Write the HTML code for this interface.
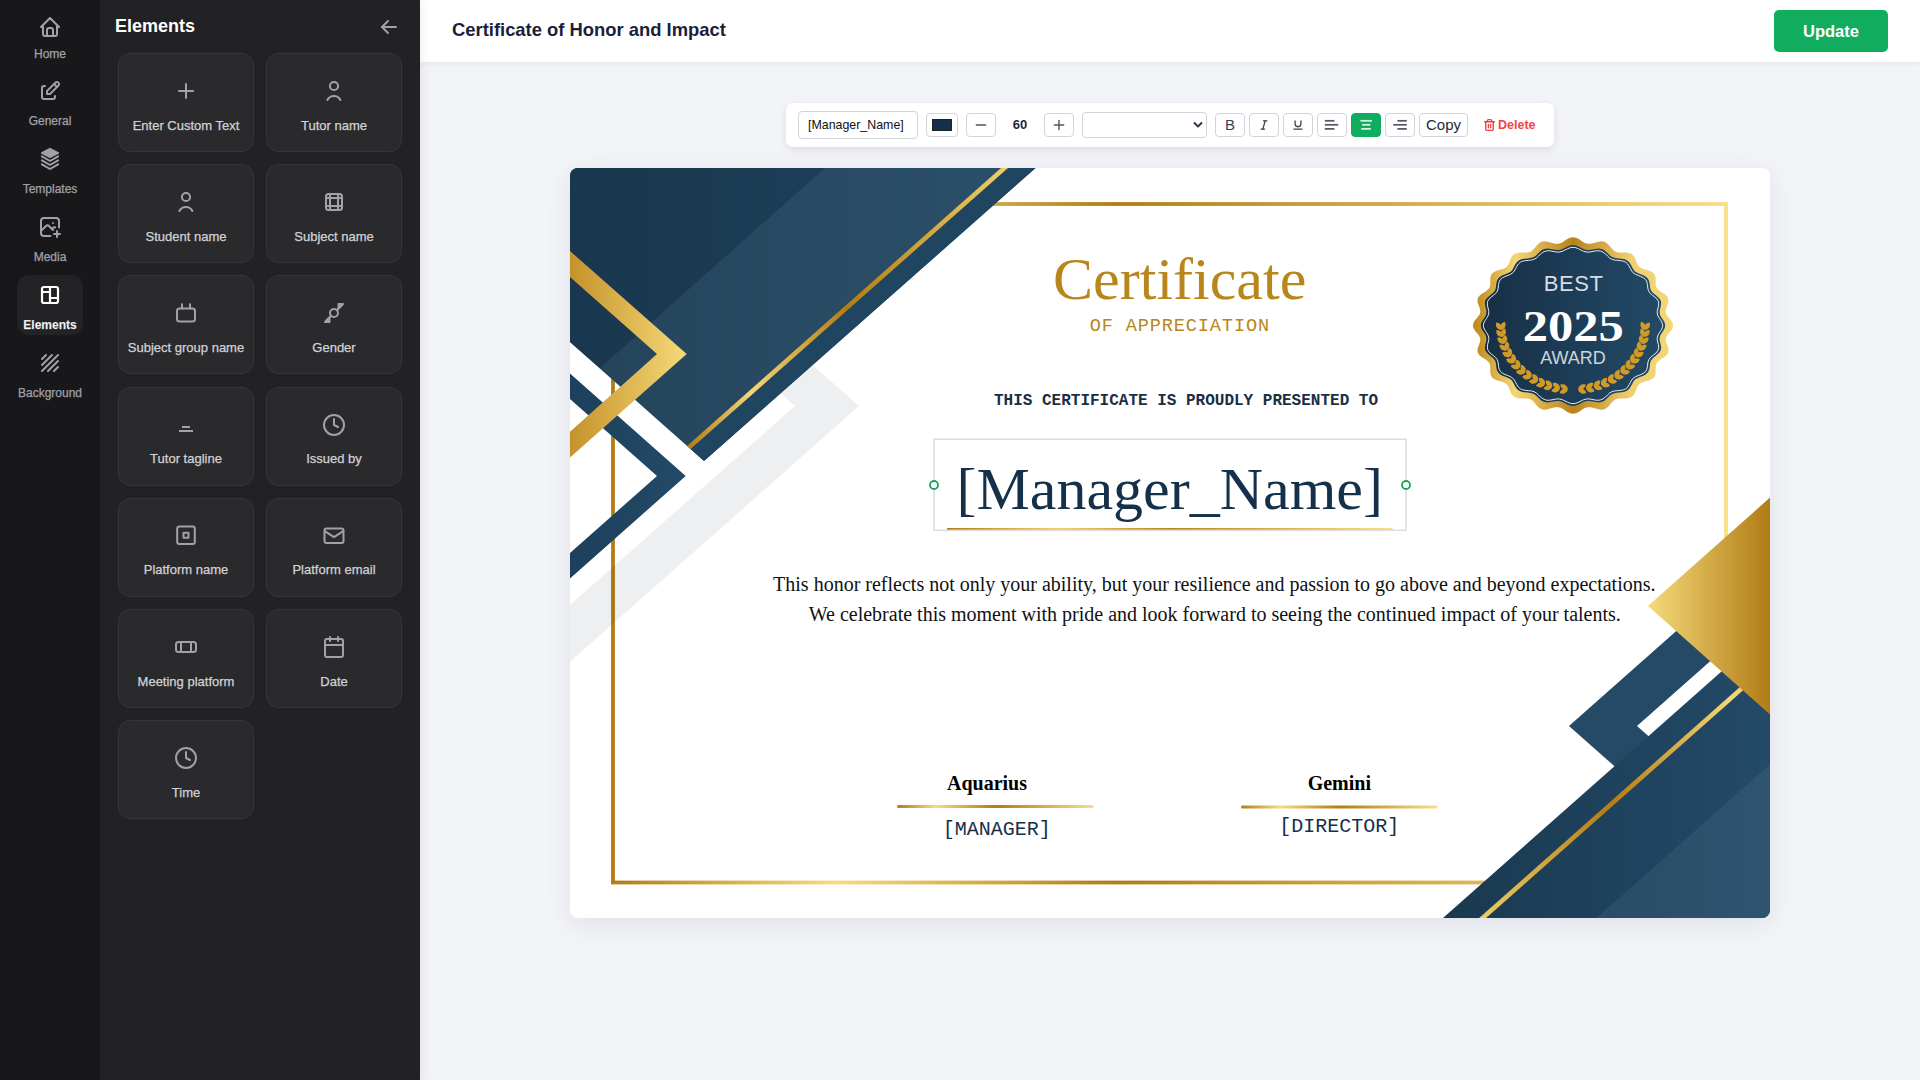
<!DOCTYPE html>
<html><head><meta charset="utf-8">
<style>
*{margin:0;padding:0;box-sizing:border-box}
html,body{width:1920px;height:1080px;overflow:hidden;background:#f3f4f8;font-family:"Liberation Sans",sans-serif}
.abs{position:absolute}
#nav{position:absolute;left:0;top:0;width:100px;height:1080px;background:#18181b}
.ni{position:absolute;left:0;width:100px;text-align:center;color:#a1a1aa;font-size:12px;line-height:14px;-webkit-text-stroke:0.25px #a1a1aa}
.ni svg{position:absolute;left:40px;width:20px;height:20px}
.nact{position:absolute;left:17px;top:275px;width:66px;height:60px;border-radius:12px;background:#232326}
#panel{position:absolute;left:100px;top:0;width:320px;height:1080px;background:#222224;z-index:2;box-shadow:2px 0 10px rgba(0,0,0,0.07)}
.card{position:absolute;width:136px;height:99px;border:1px solid #353538;border-radius:12px;background:#2a2a2d}
.card svg{position:absolute;left:55px;top:25px;width:24px;height:24px}
.card span{position:absolute;left:0;right:0;top:63.7px;text-align:center;color:#d2d2d6;font-size:13px;line-height:16px;-webkit-text-stroke:0.25px #d2d2d6}
#main{position:absolute;left:420px;top:0;width:1500px;height:1080px;background:#f3f4f8}
#header{position:absolute;left:0;top:0;width:1500px;height:62px;background:#fff;box-shadow:0 1px 6px rgba(20,30,60,0.08)}
#toolbar{position:absolute;left:366px;top:103px;width:768px;height:44px;background:#fff;border-radius:7px;box-shadow:0 3px 8px rgba(20,30,60,0.10)}
.tb{position:absolute;top:10px;height:24px;border:1px solid #d1d5db;border-radius:4px;background:#fff}
#cert{position:absolute;left:150px;top:168px;width:1200px;height:750px;background:#fff;border-radius:8px;overflow:hidden;box-shadow:0 6px 28px rgba(20,30,60,0.09)}
</style></head><body>
<div id="nav">
  <div class="nact"></div>
  <svg class="abs" style="left:38px;top:15px" width="24" height="24" viewBox="0 0 24 24" fill="none" stroke="#a1a1aa" stroke-width="2" stroke-linecap="round" stroke-linejoin="round"><path d="M5 12H3l9-9 9 9h-2"/><path d="M5 12v7a2 2 0 0 0 2 2h10a2 2 0 0 0 2-2v-7"/><path d="M9 21v-6a2 2 0 0 1 2-2h2a2 2 0 0 1 2 2v6"/></svg>
  <div class="ni" style="top:47px">Home</div>
  <svg class="abs" style="left:38px;top:78.5px" width="24" height="24" viewBox="0 0 24 24" fill="none" stroke="#a1a1aa" stroke-width="2" stroke-linecap="round" stroke-linejoin="round"><path d="M7 7H6a2 2 0 0 0-2 2v9a2 2 0 0 0 2 2h9a2 2 0 0 0 2-2v-1"/><path d="M20.385 6.585a2.100 2.100 0 0 0-2.970-2.970L9 12v3h3z"/><path d="M16 5l3 3"/></svg>
  <div class="ni" style="top:114px">General</div>
  <svg class="abs" style="left:38px;top:147px" width="24" height="24" viewBox="0 0 24 24" fill="none" stroke="#a1a1aa" stroke-width="2" stroke-linecap="round" stroke-linejoin="round"><path d="M12 1.6L20.3 6 12 10.4 3.7 6z" fill="#a1a1aa" stroke-width="1.6"/><path d="M3.9 9.3L12 14l8.1-4.7"/><path d="M3.9 13.3L12 18l8.1-4.7"/><path d="M3.9 17.3L12 22l8.1-4.7"/></svg>
  <div class="ni" style="top:182px">Templates</div>
  <svg class="abs" style="left:38px;top:215px" width="24" height="24" viewBox="0 0 24 24" fill="none" stroke="#a1a1aa" stroke-width="2" stroke-linecap="round" stroke-linejoin="round"><path d="M15 8h.01"/><path d="M12.5 21H6a3 3 0 0 1-3-3V6a3 3 0 0 1 3-3h12a3 3 0 0 1 3 3v6.5"/><path d="M3 16l5-5c.928-.893 2.072-.893 3 0l4 4"/><path d="M14 14l1-1c.67-.644 1.45-.824 2.182-.54"/><path d="M16 19h6"/><path d="M19 16v6"/></svg>
  <div class="ni" style="top:250px">Media</div>
  <svg class="abs" style="left:38px;top:283px" width="24" height="24" viewBox="0 0 24 24" fill="none" stroke="#ffffff" stroke-width="2.2" stroke-linecap="round" stroke-linejoin="round"><path d="M4 6a2 2 0 0 1 2-2h12a2 2 0 0 1 2 2v12a2 2 0 0 1-2 2H6a2 2 0 0 1-2-2z"/><path d="M4 9h8"/><path d="M12 15h8"/><path d="M12 4v16"/></svg>
  <div class="ni" style="top:318px;color:#fff;font-weight:bold">Elements</div>
  <svg class="abs" style="left:38px;top:351px" width="24" height="24" viewBox="0 0 24 24" fill="none" stroke="#a1a1aa" stroke-width="2" stroke-linecap="round" stroke-linejoin="round"><path d="M4 8l4-4"/><path d="M14 4L4 14"/><path d="M4 20L20 4"/><path d="M20 10L10 20"/><path d="M20 16l-4 4"/></svg>
  <div class="ni" style="top:386px">Background</div>
</div>
<div id="panel">
<div class="abs" style="left:15px;top:15px;color:#fff;font-size:18px;font-weight:bold;line-height:22px">Elements</div>
<svg class="abs" style="left:277px;top:15px" width="24" height="24" viewBox="0 0 24 24" fill="none" stroke="#a1a1aa" stroke-width="2" stroke-linecap="round" stroke-linejoin="round"><path d="M5 12h14"/><path d="M5 12l6 6"/><path d="M5 12l6-6"/></svg>
<div class="card" style="left:18px;top:53.00px"><svg viewBox="0 0 24 24" fill="none" stroke="#a1a1aa" stroke-width="2" stroke-linecap="round" stroke-linejoin="round"><path d="M12 5v14"/><path d="M5 12h14"/></svg><span>Enter Custom Text</span></div>
<div class="card" style="left:166px;top:53.00px"><svg viewBox="0 0 24 24" fill="none" stroke="#a1a1aa" stroke-width="2" stroke-linecap="round" stroke-linejoin="round"><circle cx="12" cy="7" r="4.1"/><path d="M5.4 21a7.3 7.3 0 0 1 13 0"/></svg><span>Tutor name</span></div>
<div class="card" style="left:18px;top:164.18px"><svg viewBox="0 0 24 24" fill="none" stroke="#a1a1aa" stroke-width="2" stroke-linecap="round" stroke-linejoin="round"><circle cx="12" cy="7" r="4.1"/><path d="M5.4 21a7.3 7.3 0 0 1 13 0"/></svg><span>Student name</span></div>
<div class="card" style="left:166px;top:164.18px"><svg viewBox="0 0 24 24" fill="none" stroke="#a1a1aa" stroke-width="2" stroke-linecap="round" stroke-linejoin="round"><rect x="4" y="4" width="16" height="16" rx="2.5"/><path d="M8 4v16"/><path d="M16 4v16"/><path d="M4 8h16"/><path d="M4 16h16"/></svg><span>Subject name</span></div>
<div class="card" style="left:18px;top:275.36px"><svg viewBox="0 0 24 24" fill="none" stroke="#a1a1aa" stroke-width="2" stroke-linecap="round" stroke-linejoin="round"><rect x="3" y="7.4" width="18" height="13.2" rx="2.5"/><path d="M8 3.2v4.2"/><path d="M16 3.2v4.2"/></svg><span>Subject group name</span></div>
<div class="card" style="left:166px;top:275.36px"><svg viewBox="0 0 24 24" fill="none" stroke="#a1a1aa" stroke-width="2" stroke-linecap="round" stroke-linejoin="round"><circle cx="12" cy="12" r="4"/><path d="M9.2 14.8L4 20"/><path d="M14.8 9.2L20 4"/><path d="M16.5 3h4.5L16.5 7.5z" fill="#a1a1aa"/><path d="M3 21h4.5V16.5z" fill="#a1a1aa"/></svg><span>Gender</span></div>
<div class="card" style="left:18px;top:386.54px"><svg viewBox="0 0 24 24" fill="none" stroke="#a1a1aa" stroke-width="2" stroke-linecap="round" stroke-linejoin="round"><path d="M8 14h8" stroke-linecap="butt"/><path d="M5 18h14" stroke-linecap="butt"/></svg><span>Tutor tagline</span></div>
<div class="card" style="left:166px;top:386.54px"><svg viewBox="0 0 24 24" fill="none" stroke="#a1a1aa" stroke-width="2" stroke-linecap="round" stroke-linejoin="round"><circle cx="12" cy="12" r="10"/><path d="M12 6v6l4 2"/></svg><span>Issued by</span></div>
<div class="card" style="left:18px;top:497.72px"><svg viewBox="0 0 24 24" fill="none" stroke="#a1a1aa" stroke-width="2" stroke-linecap="round" stroke-linejoin="round"><rect x="3.2" y="2.4" width="17.6" height="17.6" rx="2"/><rect x="9.5" y="8.7" width="5" height="5"/></svg><span>Platform name</span></div>
<div class="card" style="left:166px;top:497.72px"><svg viewBox="0 0 24 24" fill="none" stroke="#a1a1aa" stroke-width="2" stroke-linecap="round" stroke-linejoin="round"><rect x="2.5" y="4.6" width="19" height="14.3" rx="2"/><path d="M2.8 7.2l9.2 6 9.2-6"/></svg><span>Platform email</span></div>
<div class="card" style="left:18px;top:608.90px"><svg viewBox="0 0 24 24" fill="none" stroke="#a1a1aa" stroke-width="2" stroke-linecap="round" stroke-linejoin="round"><rect x="2" y="7" width="20" height="10" rx="2.5"/><path d="M7 7v10"/><path d="M17 7v10"/></svg><span>Meeting platform</span></div>
<div class="card" style="left:166px;top:608.90px"><svg viewBox="0 0 24 24" fill="none" stroke="#a1a1aa" stroke-width="2" stroke-linecap="round" stroke-linejoin="round"><rect x="3" y="4" width="18" height="18" rx="2"/><path d="M8 2v4"/><path d="M16 2v4"/><path d="M3 10h18"/></svg><span>Date</span></div>
<div class="card" style="left:18px;top:720.08px"><svg viewBox="0 0 24 24" fill="none" stroke="#a1a1aa" stroke-width="2" stroke-linecap="round" stroke-linejoin="round"><circle cx="12" cy="12" r="10"/><path d="M12 6v6l4 2"/></svg><span>Time</span></div>
</div>
<div id="main">
  <div id="header">
    <div class="abs" style="left:32px;top:19px;font-size:18.4px;font-weight:bold;color:#1c1e3a;line-height:22px;white-space:nowrap">Certificate of Honor and Impact</div>
    <div class="abs" style="left:1354px;top:10px;width:114px;height:42px;background:#10ad5f;border-radius:5px;color:#fff;font-weight:bold;font-size:16.5px;text-align:center;line-height:42px">Update</div>
  </div>
  <div id="toolbar">
    <div class="tb" style="left:12px;top:8px;width:120px;height:28px;border-color:#cfd3da;font-size:12.4px;color:#111;line-height:26px;padding-left:9px">[Manager_Name]</div>
    <div class="tb" style="left:140px;width:32px"><div class="abs" style="left:5px;top:5px;width:20px;height:12px;background:#15304a;border:1px solid #222"></div></div>
    <div class="tb" style="left:180px;width:30px"><svg class="abs" style="left:7px;top:4px" width="14" height="14" viewBox="0 0 24 24" fill="none" stroke="#4b5563" stroke-width="2.4" stroke-linecap="round"><path d="M4 12h16"/></svg></div>
    <div class="abs" style="left:220px;top:14px;width:28px;text-align:center;font-size:13px;font-weight:bold;color:#1f2937;line-height:16px">60</div>
    <div class="tb" style="left:258px;width:30px"><svg class="abs" style="left:7px;top:4px" width="14" height="14" viewBox="0 0 24 24" fill="none" stroke="#4b5563" stroke-width="2.4" stroke-linecap="round"><path d="M4 12h16"/><path d="M12 4v16"/></svg></div>
    <div class="tb" style="left:296px;top:9px;width:125px;height:26px"><svg class="abs" style="left:110px;top:8px" width="10" height="8" viewBox="0 0 10 8" fill="none" stroke="#2d3748" stroke-width="2" stroke-linecap="round" stroke-linejoin="round"><path d="M1.5 2l3.5 3.5L8.5 2"/></svg></div>
    <div class="tb" style="left:429px;width:30px;font-size:15px;color:#374151;text-align:center;line-height:22px">B</div>
    <div class="tb" style="left:463px;width:30px"><svg class="abs" style="left:7px;top:4px" width="14" height="14" viewBox="0 0 24 24" fill="none" stroke="#374151" stroke-width="2.2" stroke-linecap="round"><path d="M11 5h6"/><path d="M7 19h6"/><path d="M14 5l-4 14"/></svg></div>
    <div class="tb" style="left:497px;width:30px"><svg class="abs" style="left:7px;top:4px" width="14" height="14" viewBox="0 0 24 24" fill="none" stroke="#374151" stroke-width="2.2" stroke-linecap="round"><path d="M7 5v5a5 5 0 0 0 10 0V5"/><path d="M5 19h14"/></svg></div>
    <div class="tb" style="left:531px;width:30px"><svg class="abs" style="left:-1px;top:-1px" width="30" height="24" viewBox="0 0 30 24" fill="none" stroke="#535a68" stroke-width="1.75"><path d="M7.8 7.8h9.6"/><path d="M7.8 11.8h13.5"/><path d="M7.8 15.9h9.6"/></svg></div>
    <div class="tb" style="left:565px;width:30px;background:#10ad5f;border-color:#10ad5f"><svg class="abs" style="left:-1px;top:-1px" width="30" height="24" viewBox="0 0 30 24" fill="none" stroke="#d4f3df" stroke-width="1.75"><path d="M9.4 7.8h11.6"/><path d="M11 11.8h8.4"/><path d="M10.2 15.9h9.7"/></svg></div>
    <div class="tb" style="left:599px;width:30px"><svg class="abs" style="left:-1px;top:-1px" width="30" height="24" viewBox="0 0 30 24" fill="none" stroke="#535a68" stroke-width="1.75"><path d="M12.4 7.8h9.4"/><path d="M8.2 11.8h13.6"/><path d="M12.4 15.9h9.4"/></svg></div>
    <div class="tb" style="left:633px;width:49px;font-size:15px;color:#1f2937;text-align:center;line-height:22px">Copy</div>
    <svg class="abs" style="left:697px;top:15px" width="13" height="14" viewBox="0 0 24 24" fill="none" stroke="#ef4444" stroke-width="2.6" stroke-linecap="round" stroke-linejoin="round"><path d="M3 6h18"/><path d="M19 6v14a2 2 0 0 1-2 2H7a2 2 0 0 1-2-2V6"/><path d="M8 6V4a2 2 0 0 1 2-2h4a2 2 0 0 1 2 2v2"/><path d="M10 11v6"/><path d="M14 11v6"/></svg>
    <div class="abs" style="left:712px;top:15px;font-size:12.5px;font-weight:bold;color:#ef4444;line-height:15px">Delete</div>
  </div>
  <div id="cert">
    <svg class="abs" style="left:0;top:0" width="1200" height="750" viewBox="0 0 1200 750">
      <defs>
        <linearGradient id="gb" x1="43" y1="0" x2="1156" y2="0" gradientUnits="userSpaceOnUse">
          <stop offset="0" stop-color="#b47c14"/><stop offset="0.2" stop-color="#f7dc7e"/><stop offset="0.45" stop-color="#b47c14"/><stop offset="1" stop-color="#f8df84"/>
        </linearGradient>
        <linearGradient id="gl" x1="117" y1="0" x2="438" y2="0" gradientUnits="userSpaceOnUse">
          <stop offset="0" stop-color="#b27a14"/><stop offset="0.2" stop-color="#f4d777"/><stop offset="0.5" stop-color="#b47c14"/><stop offset="1" stop-color="#efd06a"/>
        </linearGradient>
        <linearGradient id="gl2" x1="909" y1="0" x2="1204" y2="0" gradientUnits="userSpaceOnUse">
          <stop offset="0" stop-color="#ecce68"/><stop offset="0.45" stop-color="#b47c14"/><stop offset="0.85" stop-color="#f4d777"/><stop offset="1" stop-color="#e2be58"/>
        </linearGradient>
        <linearGradient id="gch" x1="0" y1="0" x2="117" y2="0" gradientUnits="userSpaceOnUse">
          <stop offset="0" stop-color="#c5922a"/><stop offset="1" stop-color="#f6da7a"/>
        </linearGradient>
        <linearGradient id="gtri" x1="1078" y1="0" x2="1200" y2="0" gradientUnits="userSpaceOnUse">
          <stop offset="0" stop-color="#f6da7a"/><stop offset="1" stop-color="#b07c16"/>
        </linearGradient>
        <linearGradient id="nl" x1="0" y1="0" x2="466" y2="0" gradientUnits="userSpaceOnUse">
          <stop offset="0" stop-color="#24445b"/><stop offset="1" stop-color="#2c5069"/>
        </linearGradient>
        <linearGradient id="nd" x1="0" y1="0" x2="255" y2="0" gradientUnits="userSpaceOnUse">
          <stop offset="0" stop-color="#19374e"/><stop offset="1" stop-color="#1d3e57"/>
        </linearGradient>
        <linearGradient id="nc" x1="0" y1="0" x2="116" y2="0" gradientUnits="userSpaceOnUse">
          <stop offset="0" stop-color="#1d405c"/><stop offset="1" stop-color="#224a67"/>
        </linearGradient>
        <linearGradient id="nb" x1="873" y1="0" x2="1200" y2="0" gradientUnits="userSpaceOnUse">
          <stop offset="0" stop-color="#1a3950"/><stop offset="1" stop-color="#234a68"/>
        </linearGradient>
        <linearGradient id="nbl" x1="1026" y1="0" x2="1200" y2="0" gradientUnits="userSpaceOnUse">
          <stop offset="0" stop-color="#2a4c66"/><stop offset="1" stop-color="#2e546f"/>
        </linearGradient>
        <linearGradient id="gs1" x1="327" y1="0" x2="523.5" y2="0" gradientUnits="userSpaceOnUse">
          <stop offset="0" stop-color="#b47c14"/><stop offset="0.2" stop-color="#f7dc7e"/><stop offset="0.5" stop-color="#b47c14"/><stop offset="1" stop-color="#f8df84"/>
        </linearGradient>
        <linearGradient id="gs2" x1="671" y1="0" x2="867.5" y2="0" gradientUnits="userSpaceOnUse">
          <stop offset="0" stop-color="#b47c14"/><stop offset="0.2" stop-color="#f7dc7e"/><stop offset="0.5" stop-color="#b47c14"/><stop offset="1" stop-color="#f8df84"/>
        </linearGradient>
        <linearGradient id="gs3" x1="377" y1="0" x2="822.7" y2="0" gradientUnits="userSpaceOnUse">
          <stop offset="0" stop-color="#b47c14"/><stop offset="0.25" stop-color="#f0d070"/><stop offset="0.5" stop-color="#b8841c"/><stop offset="1" stop-color="#f8df84"/>
        </linearGradient>
      </defs>
      <rect x="43" y="36" width="1113" height="678.5" fill="none" stroke="url(#gb)" stroke-width="3.8"/>
      <polygon points="289,238 0,-17.8 0,39 225,238 0,437 0,493.8" fill="#142032" fill-opacity="0.072"/>
      <polygon points="0,0 465.6,0 134,293 0,174" fill="url(#nl)"/>
      <polygon points="0,0 255,0 30,200 0,174" fill="url(#nd)"/>
      <polygon points="436.5,0 465.6,0 134,293 120.5,281" fill="#1f4560"/>
      <polygon points="431,0 438,0 120.5,281 117,278" fill="url(#gl)"/>
      <polygon points="0,205.6 115.7,308 0,410.4 0,385 87,308 0,231" fill="url(#nc)"/>
      <polygon points="0,83 116.7,186 0,289.6 0,263.7 87,186 0,109" fill="url(#gch)"/>
      <polygon points="999,558 1200,380.1 1200,735.9" fill="#244a66"/>
      <polygon points="1067,558 1200,440.3 1200,675.7" fill="#ffffff"/>
      <polygon points="873,750 1200,460.6 1200,750" fill="url(#nb)"/>
      <polygon points="1026.6,750 1200,596.5 1200,750" fill="url(#nbl)"/>
      <polygon points="909.1,750 916.1,750 1204,495 1197,495" fill="url(#gl2)"/>
      <polygon points="1078,438 1200,329.6 1200,546.4" fill="url(#gtri)"/>
      <g font-family="Liberation Serif, serif">
        <text x="609.7" y="131" font-size="60" fill="#b8861b" text-anchor="middle">Certificate</text>
        <text x="609.85" y="162.7" font-family="Liberation Mono, monospace" font-size="18.6" letter-spacing="0.85" fill="#b8861b" text-anchor="middle">OF APPRECIATION</text>
        <text x="616" y="236.8" font-family="Liberation Mono, monospace" font-weight="bold" font-size="16" fill="#1a2e45" text-anchor="middle">THIS CERTIFICATE IS PROUDLY PRESENTED TO</text>
        <text x="599.7" y="341" font-size="60" fill="#15304a" text-anchor="middle">[Manager_Name]</text>
        <text x="644.3" y="422.7" font-size="20" fill="#111111" text-anchor="middle">This honor reflects not only your ability, but your resilience and passion to go above and beyond expectations.</text>
        <text x="644.8" y="452.9" font-size="20" fill="#111111" text-anchor="middle">We celebrate this moment with pride and look forward to seeing the continued impact of your talents.</text>
        <text x="417" y="622" font-size="20" font-weight="bold" fill="#000" text-anchor="middle">Aquarius</text>
        <text x="769.3" y="622" font-size="20" font-weight="bold" fill="#000" text-anchor="middle">Gemini</text>
        <text x="426.75" y="667" font-family="Liberation Mono, monospace" font-size="20" fill="#15304a" text-anchor="middle">[MANAGER]</text>
        <text x="769.3" y="664.25" font-family="Liberation Mono, monospace" font-size="20" fill="#15304a" text-anchor="middle">[DIRECTOR]</text>
      </g>
      <defs>
        <linearGradient id="bg1" x1="906" y1="0" x2="1100" y2="0" gradientUnits="userSpaceOnUse">
          <stop offset="0" stop-color="#c08c1e"/><stop offset="0.2" stop-color="#f3d676"/><stop offset="0.5" stop-color="#b8821a"/><stop offset="0.8" stop-color="#f0d070"/><stop offset="1" stop-color="#f3d676"/>
        </linearGradient>
        <linearGradient id="bg2" x1="0" y1="0" x2="1" y2="0">
          <stop offset="0" stop-color="#172f45"/><stop offset="1" stop-color="#234a67"/>
        </linearGradient>
        <linearGradient id="bg3" x1="920" y1="150" x2="1086" y2="150" gradientUnits="userSpaceOnUse">
          <stop offset="0" stop-color="#cf9a26"/><stop offset="0.3" stop-color="#eecb66"/><stop offset="0.45" stop-color="#d6a334"/><stop offset="0.55" stop-color="#d39f30"/><stop offset="0.8" stop-color="#f0d070"/><stop offset="1" stop-color="#f5da7a"/>
        </linearGradient>
      </defs>
      <path d="M1103.1,157.5 L1102.5,160.3 L1100.8,162.9 L1098.6,165.5 L1096.7,167.9 L1095.7,170.4 L1095.8,173.1 L1096.7,176.0 L1097.9,179.0 L1098.6,182.0 L1098.2,184.8 L1096.6,187.2 L1094.1,189.3 L1091.1,191.1 L1088.5,193.0 L1086.7,195.1 L1085.8,197.6 L1085.7,200.6 L1085.7,203.8 L1085.3,206.8 L1084.0,209.4 L1081.6,211.3 L1078.5,212.5 L1075.0,213.5 L1071.9,214.5 L1069.4,216.0 L1067.7,218.2 L1066.5,221.0 L1065.4,224.0 L1064.0,226.8 L1061.8,228.9 L1058.9,230.0 L1055.5,230.4 L1051.9,230.4 L1048.5,230.5 L1045.6,231.2 L1043.2,232.9 L1041.1,235.2 L1039.1,237.8 L1036.7,240.0 L1033.9,241.4 L1030.8,241.7 L1027.4,241.1 L1024.0,240.1 L1020.7,239.3 L1017.7,239.2 L1014.8,240.1 L1012.0,241.8 L1009.2,243.7 L1006.1,245.2 L1003.0,245.7 L999.9,245.2 L996.8,243.7 L994.0,241.8 L991.2,240.1 L988.3,239.2 L985.3,239.3 L982.0,240.1 L978.6,241.1 L975.2,241.7 L972.1,241.4 L969.3,240.0 L966.9,237.8 L964.9,235.2 L962.8,232.9 L960.4,231.2 L957.5,230.5 L954.1,230.4 L950.5,230.4 L947.1,230.0 L944.2,228.9 L942.0,226.8 L940.6,224.0 L939.5,221.0 L938.3,218.2 L936.6,216.0 L934.1,214.5 L931.0,213.5 L927.5,212.5 L924.4,211.3 L922.0,209.4 L920.7,206.8 L920.3,203.8 L920.3,200.6 L920.2,197.6 L919.3,195.1 L917.5,193.0 L914.9,191.1 L911.9,189.3 L909.4,187.2 L907.8,184.8 L907.4,182.0 L908.1,179.0 L909.3,176.0 L910.2,173.1 L910.3,170.4 L909.3,167.9 L907.4,165.5 L905.2,162.9 L903.5,160.3 L902.9,157.5 L903.5,154.7 L905.2,152.1 L907.4,149.5 L909.3,147.1 L910.3,144.6 L910.2,141.9 L909.3,139.0 L908.1,136.0 L907.4,133.0 L907.8,130.2 L909.4,127.8 L911.9,125.7 L914.9,123.9 L917.5,122.0 L919.3,119.9 L920.2,117.4 L920.3,114.4 L920.3,111.2 L920.7,108.2 L922.0,105.6 L924.4,103.7 L927.5,102.5 L931.0,101.5 L934.1,100.5 L936.6,99.0 L938.3,96.8 L939.5,94.0 L940.6,91.0 L942.0,88.2 L944.2,86.1 L947.1,85.0 L950.5,84.6 L954.1,84.6 L957.5,84.5 L960.4,83.8 L962.8,82.1 L964.9,79.8 L966.9,77.2 L969.3,75.0 L972.1,73.6 L975.2,73.3 L978.6,73.9 L982.0,74.9 L985.3,75.7 L988.3,75.8 L991.2,74.9 L994.0,73.2 L996.8,71.3 L999.9,69.8 L1003.0,69.3 L1006.1,69.8 L1009.2,71.3 L1012.0,73.2 L1014.8,74.9 L1017.7,75.8 L1020.7,75.7 L1024.0,74.9 L1027.4,73.9 L1030.8,73.3 L1033.9,73.6 L1036.7,75.0 L1039.1,77.2 L1041.1,79.8 L1043.2,82.1 L1045.6,83.8 L1048.5,84.5 L1051.9,84.6 L1055.5,84.6 L1058.9,85.0 L1061.8,86.1 L1064.0,88.2 L1065.4,91.0 L1066.5,94.0 L1067.7,96.8 L1069.4,99.0 L1071.9,100.5 L1075.0,101.5 L1078.5,102.5 L1081.6,103.7 L1084.0,105.6 L1085.3,108.2 L1085.7,111.2 L1085.7,114.4 L1085.8,117.4 L1086.7,119.9 L1088.5,122.0 L1091.1,123.9 L1094.1,125.7 L1096.6,127.8 L1098.2,130.2 L1098.6,133.0 L1097.9,136.0 L1096.7,139.0 L1095.8,141.9 L1095.7,144.6 L1096.7,147.1 L1098.6,149.5 L1100.8,152.1 L1102.5,154.7Z" fill="url(#bg1)"/>
      <path d="M1095.2,157.5 L1094.8,160.0 L1093.5,162.5 L1091.9,164.8 L1090.5,167.1 L1089.7,169.5 L1089.6,171.9 L1090.2,174.5 L1090.8,177.2 L1091.2,179.8 L1090.7,182.4 L1089.4,184.6 L1087.3,186.6 L1085.0,188.4 L1082.8,190.2 L1081.2,192.2 L1080.3,194.6 L1079.9,197.2 L1079.6,199.9 L1078.9,202.5 L1077.6,204.8 L1075.6,206.6 L1072.9,207.9 L1070.0,209.0 L1067.3,210.2 L1065.0,211.6 L1063.4,213.6 L1062.1,215.9 L1060.8,218.5 L1059.3,220.8 L1057.2,222.6 L1054.6,223.7 L1051.6,224.3 L1048.5,224.5 L1045.5,224.9 L1042.8,225.7 L1040.5,227.1 L1038.5,229.0 L1036.4,231.1 L1034.1,232.9 L1031.5,234.0 L1028.6,234.4 L1025.6,234.1 L1022.5,233.5 L1019.5,233.0 L1016.7,233.1 L1014.1,233.8 L1011.4,235.0 L1008.7,236.5 L1005.9,237.5 L1003.0,238.0 L1000.1,237.5 L997.3,236.5 L994.6,235.0 L991.9,233.8 L989.3,233.1 L986.5,233.0 L983.5,233.5 L980.4,234.1 L977.4,234.4 L974.5,234.0 L971.9,232.9 L969.6,231.1 L967.5,229.0 L965.5,227.1 L963.2,225.7 L960.5,224.9 L957.5,224.5 L954.4,224.3 L951.4,223.7 L948.8,222.6 L946.7,220.8 L945.2,218.5 L943.9,215.9 L942.6,213.6 L941.0,211.6 L938.7,210.2 L936.0,209.0 L933.1,207.9 L930.4,206.6 L928.4,204.8 L927.1,202.5 L926.4,199.9 L926.1,197.2 L925.7,194.6 L924.8,192.2 L923.2,190.2 L921.0,188.4 L918.7,186.6 L916.6,184.6 L915.3,182.4 L914.8,179.8 L915.2,177.2 L915.8,174.5 L916.4,171.9 L916.3,169.5 L915.5,167.1 L914.1,164.8 L912.5,162.5 L911.2,160.0 L910.8,157.5 L911.2,155.0 L912.5,152.5 L914.1,150.2 L915.5,147.9 L916.3,145.5 L916.4,143.1 L915.8,140.5 L915.2,137.8 L914.8,135.2 L915.3,132.6 L916.6,130.4 L918.7,128.4 L921.0,126.6 L923.2,124.8 L924.8,122.8 L925.7,120.4 L926.1,117.8 L926.4,115.1 L927.1,112.5 L928.4,110.2 L930.4,108.4 L933.1,107.1 L936.0,106.0 L938.7,104.8 L941.0,103.4 L942.6,101.4 L943.9,99.1 L945.2,96.5 L946.7,94.2 L948.8,92.4 L951.4,91.3 L954.4,90.7 L957.5,90.5 L960.5,90.1 L963.2,89.3 L965.5,87.9 L967.5,86.0 L969.6,83.9 L971.9,82.1 L974.5,81.0 L977.4,80.6 L980.4,80.9 L983.5,81.5 L986.5,82.0 L989.3,81.9 L991.9,81.2 L994.6,80.0 L997.3,78.5 L1000.1,77.5 L1003.0,77.0 L1005.9,77.5 L1008.7,78.5 L1011.4,80.0 L1014.1,81.2 L1016.7,81.9 L1019.5,82.0 L1022.5,81.5 L1025.6,80.9 L1028.6,80.6 L1031.5,81.0 L1034.1,82.1 L1036.4,83.9 L1038.5,86.0 L1040.5,87.9 L1042.8,89.3 L1045.5,90.1 L1048.5,90.5 L1051.6,90.7 L1054.6,91.3 L1057.2,92.4 L1059.3,94.2 L1060.8,96.5 L1062.1,99.1 L1063.4,101.4 L1065.0,103.4 L1067.3,104.8 L1070.0,106.0 L1072.9,107.1 L1075.6,108.4 L1077.6,110.2 L1078.9,112.5 L1079.6,115.1 L1079.9,117.8 L1080.3,120.4 L1081.2,122.8 L1082.8,124.8 L1085.0,126.6 L1087.3,128.4 L1089.4,130.4 L1090.7,132.6 L1091.2,135.2 L1090.8,137.8 L1090.2,140.5 L1089.6,143.1 L1089.7,145.5 L1090.5,147.9 L1091.9,150.2 L1093.5,152.5 L1094.8,155.0Z" fill="url(#bg2)"/>
      <path d="M1092.7,157.5 L1092.2,159.9 L1091.0,162.3 L1089.4,164.6 L1088.1,166.9 L1087.3,169.1 L1087.2,171.5 L1087.7,174.0 L1088.4,176.6 L1088.7,179.2 L1088.3,181.7 L1087.0,183.9 L1085.0,185.8 L1082.7,187.6 L1080.6,189.3 L1079.0,191.3 L1078.1,193.5 L1077.7,196.0 L1077.4,198.7 L1076.8,201.3 L1075.6,203.5 L1073.5,205.2 L1070.9,206.5 L1068.1,207.6 L1065.5,208.7 L1063.3,210.1 L1061.7,212.0 L1060.4,214.3 L1059.2,216.7 L1057.7,219.0 L1055.7,220.8 L1053.2,221.9 L1050.2,222.4 L1047.2,222.7 L1044.3,223.0 L1041.7,223.8 L1039.5,225.1 L1037.5,227.0 L1035.5,229.0 L1033.2,230.7 L1030.7,231.9 L1027.9,232.3 L1024.9,232.0 L1021.9,231.4 L1019.1,230.9 L1016.3,231.0 L1013.7,231.7 L1011.2,232.9 L1008.5,234.2 L1005.8,235.3 L1003.0,235.7 L1000.2,235.3 L997.5,234.2 L994.8,232.9 L992.3,231.7 L989.7,231.0 L986.9,230.9 L984.1,231.4 L981.1,232.0 L978.1,232.3 L975.3,231.9 L972.8,230.7 L970.5,229.0 L968.5,227.0 L966.5,225.1 L964.3,223.8 L961.7,223.0 L958.8,222.7 L955.8,222.4 L952.8,221.9 L950.3,220.8 L948.3,219.0 L946.8,216.7 L945.6,214.3 L944.3,212.0 L942.7,210.1 L940.5,208.7 L937.9,207.6 L935.1,206.5 L932.5,205.2 L930.4,203.5 L929.2,201.3 L928.6,198.7 L928.3,196.0 L927.9,193.5 L927.0,191.3 L925.4,189.3 L923.3,187.6 L921.0,185.8 L919.0,183.9 L917.7,181.7 L917.3,179.2 L917.6,176.6 L918.3,174.0 L918.8,171.5 L918.7,169.1 L917.9,166.9 L916.6,164.6 L915.0,162.3 L913.8,159.9 L913.3,157.5 L913.8,155.1 L915.0,152.7 L916.6,150.4 L917.9,148.1 L918.7,145.9 L918.8,143.5 L918.3,141.0 L917.6,138.4 L917.3,135.8 L917.7,133.3 L919.0,131.1 L921.0,129.2 L923.3,127.4 L925.4,125.7 L927.0,123.7 L927.9,121.5 L928.3,119.0 L928.6,116.3 L929.2,113.7 L930.4,111.5 L932.5,109.8 L935.1,108.5 L937.9,107.4 L940.5,106.3 L942.7,104.9 L944.3,103.0 L945.6,100.7 L946.8,98.3 L948.3,96.0 L950.3,94.2 L952.8,93.1 L955.8,92.6 L958.8,92.3 L961.7,92.0 L964.3,91.2 L966.5,89.9 L968.5,88.0 L970.5,86.0 L972.8,84.3 L975.3,83.1 L978.1,82.7 L981.1,83.0 L984.1,83.6 L986.9,84.1 L989.7,84.0 L992.3,83.3 L994.8,82.1 L997.5,80.8 L1000.2,79.7 L1003.0,79.3 L1005.8,79.7 L1008.5,80.8 L1011.2,82.1 L1013.7,83.3 L1016.3,84.0 L1019.1,84.1 L1021.9,83.6 L1024.9,83.0 L1027.9,82.7 L1030.7,83.1 L1033.2,84.3 L1035.5,86.0 L1037.5,88.0 L1039.5,89.9 L1041.7,91.2 L1044.3,92.0 L1047.2,92.3 L1050.2,92.6 L1053.2,93.1 L1055.7,94.2 L1057.7,96.0 L1059.2,98.3 L1060.4,100.7 L1061.7,103.0 L1063.3,104.9 L1065.5,106.3 L1068.1,107.4 L1070.9,108.5 L1073.5,109.8 L1075.6,111.5 L1076.8,113.7 L1077.4,116.3 L1077.7,119.0 L1078.1,121.5 L1079.0,123.7 L1080.6,125.7 L1082.7,127.4 L1085.0,129.2 L1087.0,131.1 L1088.3,133.3 L1088.7,135.8 L1088.4,138.4 L1087.7,141.0 L1087.2,143.5 L1087.3,145.9 L1088.1,148.1 L1089.4,150.4 L1091.0,152.7 L1092.2,155.1Z" fill="none" stroke="#e6eaee" stroke-width="1"/>
      <g fill="url(#bg3)">
        <path d="M0 0C2.5 -3.2 6.5 -3.2 9 0C6.5 3.2 2.5 3.2 0 0Z" transform="translate(931.2 162.0) rotate(-122.5)"/>
        <path d="M0 0C2.5 -3.2 6.5 -3.2 9 0C6.5 3.2 2.5 3.2 0 0Z" transform="translate(931.2 162.0) rotate(-66.5)"/>
        <path d="M0 0C2.5 -3.2 6.5 -3.2 9 0C6.5 3.2 2.5 3.2 0 0Z" transform="translate(932.2 168.9) rotate(-129.6)"/>
        <path d="M0 0C2.5 -3.2 6.5 -3.2 9 0C6.5 3.2 2.5 3.2 0 0Z" transform="translate(932.2 168.9) rotate(-73.6)"/>
        <path d="M0 0C2.5 -3.2 6.5 -3.2 9 0C6.5 3.2 2.5 3.2 0 0Z" transform="translate(934.0 175.8) rotate(-136.5)"/>
        <path d="M0 0C2.5 -3.2 6.5 -3.2 9 0C6.5 3.2 2.5 3.2 0 0Z" transform="translate(934.0 175.8) rotate(-80.5)"/>
        <path d="M0 0C2.5 -3.2 6.5 -3.2 9 0C6.5 3.2 2.5 3.2 0 0Z" transform="translate(936.7 182.4) rotate(-143.4)"/>
        <path d="M0 0C2.5 -3.2 6.5 -3.2 9 0C6.5 3.2 2.5 3.2 0 0Z" transform="translate(936.7 182.4) rotate(-87.4)"/>
        <path d="M0 0C2.5 -3.2 6.5 -3.2 9 0C6.5 3.2 2.5 3.2 0 0Z" transform="translate(940.1 188.7) rotate(-150.2)"/>
        <path d="M0 0C2.5 -3.2 6.5 -3.2 9 0C6.5 3.2 2.5 3.2 0 0Z" transform="translate(940.1 188.7) rotate(-94.2)"/>
        <path d="M0 0C2.5 -3.2 6.5 -3.2 9 0C6.5 3.2 2.5 3.2 0 0Z" transform="translate(944.4 194.7) rotate(-156.7)"/>
        <path d="M0 0C2.5 -3.2 6.5 -3.2 9 0C6.5 3.2 2.5 3.2 0 0Z" transform="translate(944.4 194.7) rotate(-100.7)"/>
        <path d="M0 0C2.5 -3.2 6.5 -3.2 9 0C6.5 3.2 2.5 3.2 0 0Z" transform="translate(949.3 200.2) rotate(-163.2)"/>
        <path d="M0 0C2.5 -3.2 6.5 -3.2 9 0C6.5 3.2 2.5 3.2 0 0Z" transform="translate(949.3 200.2) rotate(-107.2)"/>
        <path d="M0 0C2.5 -3.2 6.5 -3.2 9 0C6.5 3.2 2.5 3.2 0 0Z" transform="translate(954.9 205.1) rotate(-169.4)"/>
        <path d="M0 0C2.5 -3.2 6.5 -3.2 9 0C6.5 3.2 2.5 3.2 0 0Z" transform="translate(954.9 205.1) rotate(-113.4)"/>
        <path d="M0 0C2.5 -3.2 6.5 -3.2 9 0C6.5 3.2 2.5 3.2 0 0Z" transform="translate(961.1 209.5) rotate(-175.5)"/>
        <path d="M0 0C2.5 -3.2 6.5 -3.2 9 0C6.5 3.2 2.5 3.2 0 0Z" transform="translate(961.1 209.5) rotate(-119.5)"/>
        <path d="M0 0C2.5 -3.2 6.5 -3.2 9 0C6.5 3.2 2.5 3.2 0 0Z" transform="translate(967.8 213.3) rotate(-181.5)"/>
        <path d="M0 0C2.5 -3.2 6.5 -3.2 9 0C6.5 3.2 2.5 3.2 0 0Z" transform="translate(967.8 213.3) rotate(-125.5)"/>
        <path d="M0 0C2.5 -3.2 6.5 -3.2 9 0C6.5 3.2 2.5 3.2 0 0Z" transform="translate(974.9 216.4) rotate(-187.3)"/>
        <path d="M0 0C2.5 -3.2 6.5 -3.2 9 0C6.5 3.2 2.5 3.2 0 0Z" transform="translate(974.9 216.4) rotate(-131.3)"/>
        <path d="M0 0C2.5 -3.2 6.5 -3.2 9 0C6.5 3.2 2.5 3.2 0 0Z" transform="translate(982.3 218.8) rotate(-193.1)"/>
        <path d="M0 0C2.5 -3.2 6.5 -3.2 9 0C6.5 3.2 2.5 3.2 0 0Z" transform="translate(982.3 218.8) rotate(-137.1)"/>
        <path d="M0 0C2.5 -3.2 6.5 -3.2 9 0C6.5 3.2 2.5 3.2 0 0Z" transform="translate(990.0 220.4) rotate(-198.7)"/>
        <path d="M0 0C2.5 -3.2 6.5 -3.2 9 0C6.5 3.2 2.5 3.2 0 0Z" transform="translate(990.0 220.4) rotate(-142.7)"/>
        <path d="M0 0C2.5 -3.2 6.5 -3.2 9 0C6.5 3.2 2.5 3.2 0 0Z" transform="translate(997.9 221.3) rotate(-204.4)"/>
        <path d="M0 0C2.5 -3.2 6.5 -3.2 9 0C6.5 3.2 2.5 3.2 0 0Z" transform="translate(997.9 221.3) rotate(-148.4)"/>
        <path d="M0 0C2.5 -3.2 6.5 -3.2 9 0C6.5 3.2 2.5 3.2 0 0Z" transform="translate(1074.8 162.0) rotate(-113.5)"/>
        <path d="M0 0C2.5 -3.2 6.5 -3.2 9 0C6.5 3.2 2.5 3.2 0 0Z" transform="translate(1074.8 162.0) rotate(-57.5)"/>
        <path d="M0 0C2.5 -3.2 6.5 -3.2 9 0C6.5 3.2 2.5 3.2 0 0Z" transform="translate(1073.8 168.9) rotate(-106.4)"/>
        <path d="M0 0C2.5 -3.2 6.5 -3.2 9 0C6.5 3.2 2.5 3.2 0 0Z" transform="translate(1073.8 168.9) rotate(-50.4)"/>
        <path d="M0 0C2.5 -3.2 6.5 -3.2 9 0C6.5 3.2 2.5 3.2 0 0Z" transform="translate(1072.0 175.8) rotate(-99.5)"/>
        <path d="M0 0C2.5 -3.2 6.5 -3.2 9 0C6.5 3.2 2.5 3.2 0 0Z" transform="translate(1072.0 175.8) rotate(-43.5)"/>
        <path d="M0 0C2.5 -3.2 6.5 -3.2 9 0C6.5 3.2 2.5 3.2 0 0Z" transform="translate(1069.3 182.4) rotate(-92.6)"/>
        <path d="M0 0C2.5 -3.2 6.5 -3.2 9 0C6.5 3.2 2.5 3.2 0 0Z" transform="translate(1069.3 182.4) rotate(-36.6)"/>
        <path d="M0 0C2.5 -3.2 6.5 -3.2 9 0C6.5 3.2 2.5 3.2 0 0Z" transform="translate(1065.9 188.7) rotate(-85.8)"/>
        <path d="M0 0C2.5 -3.2 6.5 -3.2 9 0C6.5 3.2 2.5 3.2 0 0Z" transform="translate(1065.9 188.7) rotate(-29.8)"/>
        <path d="M0 0C2.5 -3.2 6.5 -3.2 9 0C6.5 3.2 2.5 3.2 0 0Z" transform="translate(1061.6 194.7) rotate(-79.3)"/>
        <path d="M0 0C2.5 -3.2 6.5 -3.2 9 0C6.5 3.2 2.5 3.2 0 0Z" transform="translate(1061.6 194.7) rotate(-23.3)"/>
        <path d="M0 0C2.5 -3.2 6.5 -3.2 9 0C6.5 3.2 2.5 3.2 0 0Z" transform="translate(1056.7 200.2) rotate(-72.8)"/>
        <path d="M0 0C2.5 -3.2 6.5 -3.2 9 0C6.5 3.2 2.5 3.2 0 0Z" transform="translate(1056.7 200.2) rotate(-16.8)"/>
        <path d="M0 0C2.5 -3.2 6.5 -3.2 9 0C6.5 3.2 2.5 3.2 0 0Z" transform="translate(1051.1 205.1) rotate(-66.6)"/>
        <path d="M0 0C2.5 -3.2 6.5 -3.2 9 0C6.5 3.2 2.5 3.2 0 0Z" transform="translate(1051.1 205.1) rotate(-10.6)"/>
        <path d="M0 0C2.5 -3.2 6.5 -3.2 9 0C6.5 3.2 2.5 3.2 0 0Z" transform="translate(1044.9 209.5) rotate(-60.5)"/>
        <path d="M0 0C2.5 -3.2 6.5 -3.2 9 0C6.5 3.2 2.5 3.2 0 0Z" transform="translate(1044.9 209.5) rotate(-4.5)"/>
        <path d="M0 0C2.5 -3.2 6.5 -3.2 9 0C6.5 3.2 2.5 3.2 0 0Z" transform="translate(1038.2 213.3) rotate(-54.5)"/>
        <path d="M0 0C2.5 -3.2 6.5 -3.2 9 0C6.5 3.2 2.5 3.2 0 0Z" transform="translate(1038.2 213.3) rotate(1.5)"/>
        <path d="M0 0C2.5 -3.2 6.5 -3.2 9 0C6.5 3.2 2.5 3.2 0 0Z" transform="translate(1031.1 216.4) rotate(-48.7)"/>
        <path d="M0 0C2.5 -3.2 6.5 -3.2 9 0C6.5 3.2 2.5 3.2 0 0Z" transform="translate(1031.1 216.4) rotate(7.3)"/>
        <path d="M0 0C2.5 -3.2 6.5 -3.2 9 0C6.5 3.2 2.5 3.2 0 0Z" transform="translate(1023.7 218.8) rotate(-42.9)"/>
        <path d="M0 0C2.5 -3.2 6.5 -3.2 9 0C6.5 3.2 2.5 3.2 0 0Z" transform="translate(1023.7 218.8) rotate(13.1)"/>
        <path d="M0 0C2.5 -3.2 6.5 -3.2 9 0C6.5 3.2 2.5 3.2 0 0Z" transform="translate(1016.0 220.4) rotate(-37.3)"/>
        <path d="M0 0C2.5 -3.2 6.5 -3.2 9 0C6.5 3.2 2.5 3.2 0 0Z" transform="translate(1016.0 220.4) rotate(18.7)"/>
        <path d="M0 0C2.5 -3.2 6.5 -3.2 9 0C6.5 3.2 2.5 3.2 0 0Z" transform="translate(1008.1 221.3) rotate(-31.6)"/>
        <path d="M0 0C2.5 -3.2 6.5 -3.2 9 0C6.5 3.2 2.5 3.2 0 0Z" transform="translate(1008.1 221.3) rotate(24.4)"/>
      </g>
      <text x="1003.6" y="122.7" font-family="Liberation Sans, sans-serif" font-size="22" fill="#d6dde4" text-anchor="middle" letter-spacing="0.5">BEST</text>
      <text x="1003.2" y="172.7" font-family="Liberation Serif, serif" font-weight="bold" font-size="44" fill="#ffffff" text-anchor="middle" textLength="101" lengthAdjust="spacingAndGlyphs">2025</text>
      <text x="1003" y="196" font-family="Liberation Sans, sans-serif" font-size="18" fill="#cdd5dd" text-anchor="middle">AWARD</text>
      <rect x="327" y="637.1" width="196.5" height="3" rx="1.5" fill="url(#gs1)"/>
      <rect x="671" y="637.4" width="196.5" height="3" rx="1.5" fill="url(#gs2)"/>
      <rect x="377" y="360" width="445.7" height="2" fill="url(#gs3)"/>
      <rect x="364" y="271.3" width="472" height="91" fill="none" stroke="#d9dbe0" stroke-width="1.5"/>
      <circle cx="364" cy="317" r="4" fill="#fff" stroke="#1aa35a" stroke-width="1.8"/>
      <circle cx="836" cy="317" r="4" fill="#fff" stroke="#1aa35a" stroke-width="1.8"/>
    </svg>
  </div>
</div>
</body></html>
